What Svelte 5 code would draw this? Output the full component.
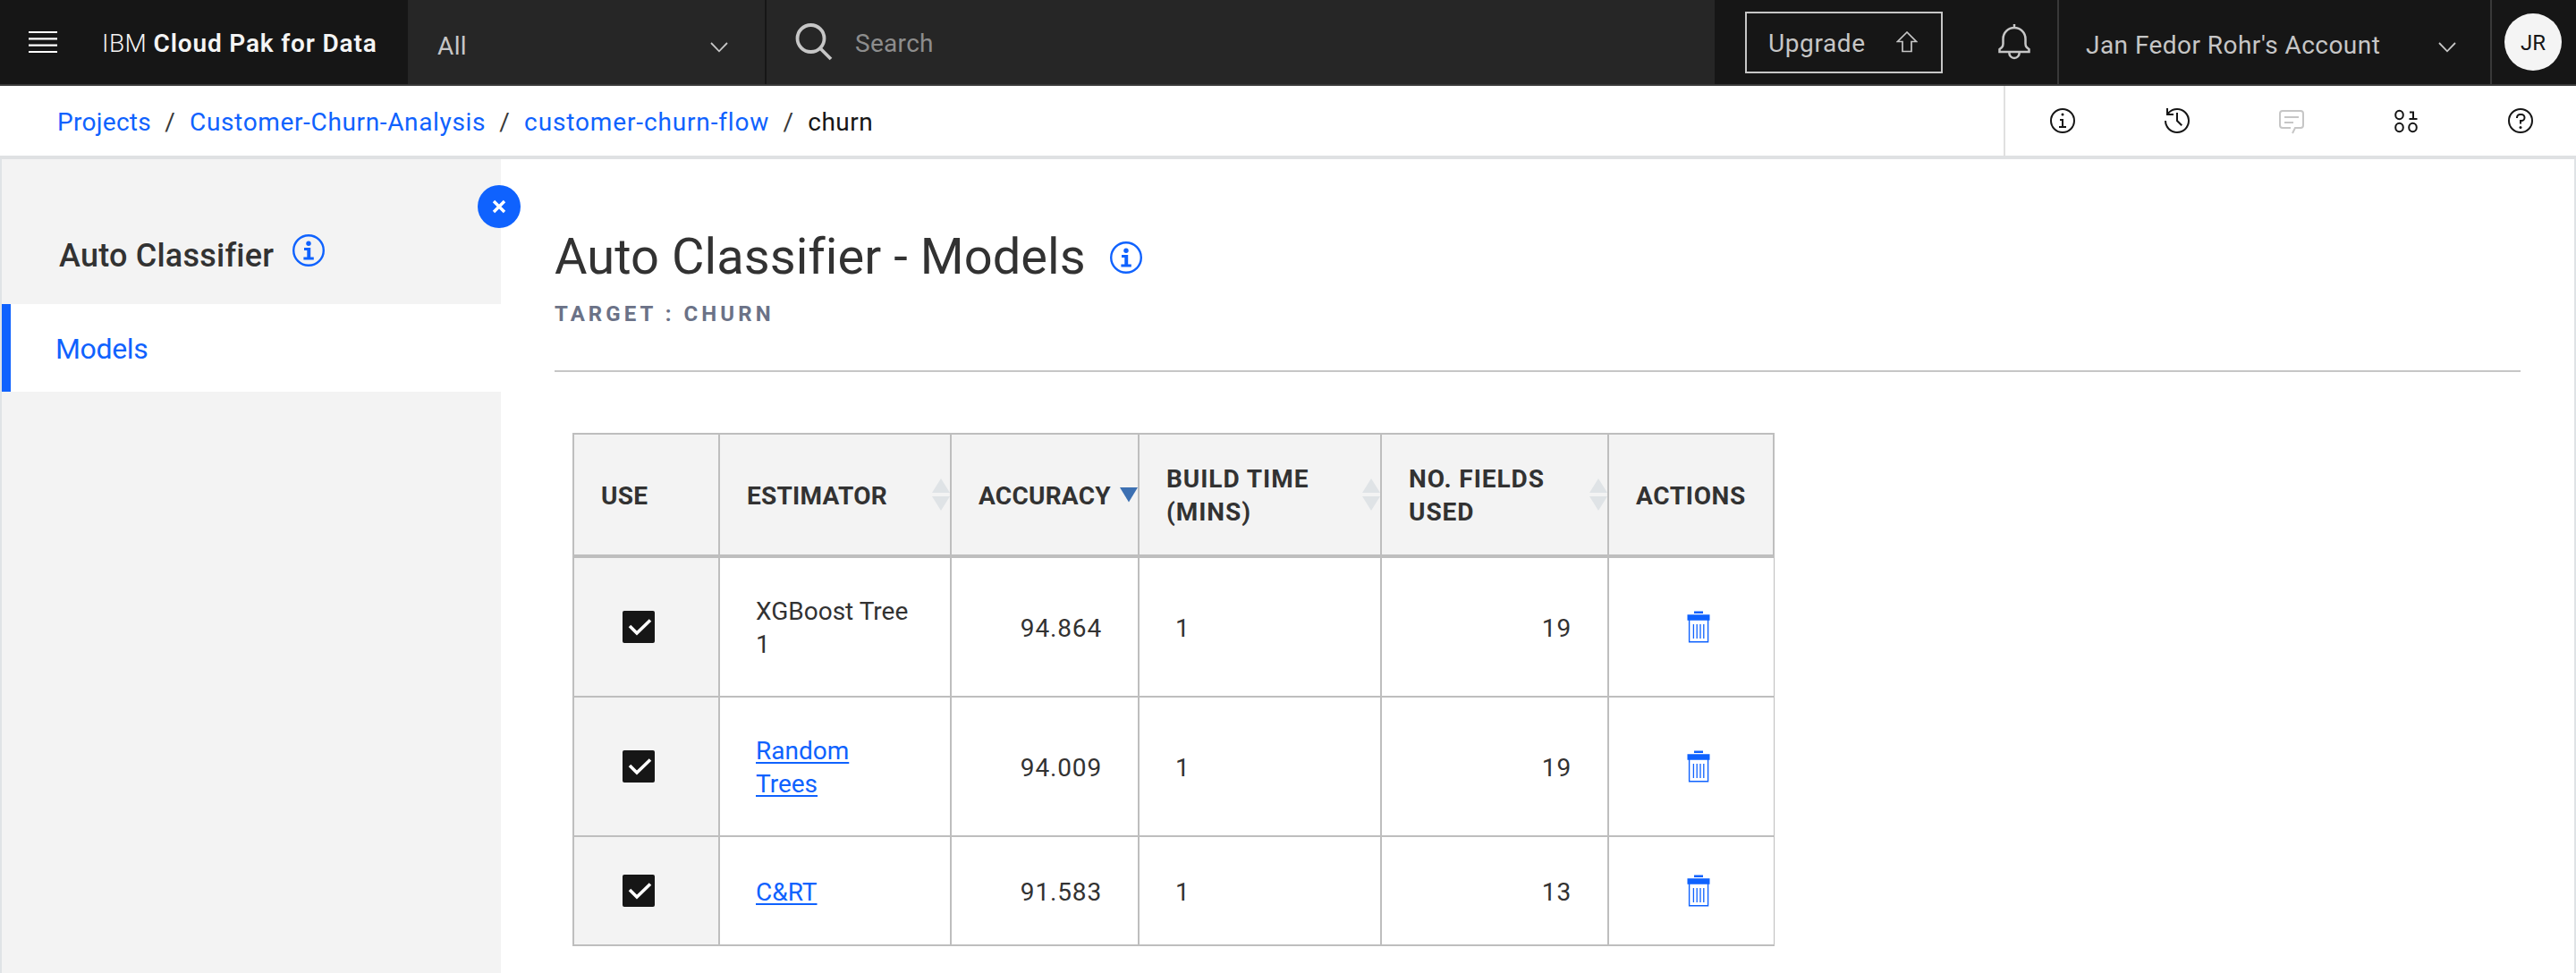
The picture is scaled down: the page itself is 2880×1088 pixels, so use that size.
<script>
  const crumbs = [
    { label: 'Projects', cls: 'c1' },
    { label: 'Customer-Churn-Analysis', cls: 'c2' },
    { label: 'customer-churn-flow', cls: 'c3' }
  ];
  const columns = [
    { label: 'USE', sort: '' },
    { label: 'ESTIMATOR', sort: 'both' },
    { label: 'ACCURACY', sort: 'down' },
    { label: 'BUILD TIME (MINS)', sort: 'both', wide: true },
    { label: 'NO. FIELDS USED', sort: 'both', wide: true },
    { label: 'ACTIONS', sort: '' }
  ];
  const models = [
    { name: 'XGBoost Tree 1', link: false, accuracy: '94.864', time: 1, fields: 19 },
    { name: 'Random Trees', link: true, accuracy: '94.009', time: 1, fields: 19 },
    { name: 'C&RT', link: true, accuracy: '91.583', time: 1, fields: 13 }
  ];
</script>

{#snippet chevron()}
  <svg class="chevron" width="20" height="12" viewBox="0 0 20 12"><path d="M1 1l9 9.3L19 1" /></svg>
{/snippet}

{#snippet info()}
  <svg class="info" width="36" height="36" viewBox="0 0 36 36">
    <circle cx="18" cy="18" r="16.8" fill="none" stroke="currentColor" stroke-width="2.4" />
    <circle cx="18" cy="10.2" r="2.7" fill="currentColor" />
    <path d="M13 15h7.200v10.600h3.600v2.900H12.400V25.600H16.300v-7.700H13z" fill="currentColor" />
  </svg>
{/snippet}

<div class="page">
  <header>
    <div class="brand">
      <svg width="32" height="24" viewBox="0 0 32 24"><path d="M0 1h32M0 8.300h32M0 15.700h32M0 23h32" stroke="#fff" stroke-width="2.200" /></svg>
      <span class="name">IBM <b>Cloud Pak for Data</b></span>
    </div>
    <div class="scope"><span>All</span>{@render chevron()}</div>
    <div class="search">
      <svg width="42" height="42" viewBox="0 0 42 42"><circle cx="17.500" cy="17" r="15" /><path d="M28 28l12 12" /></svg>
      <span>Search</span>
    </div>
    <div class="tools">
      <button class="upgrade">
        <span>Upgrade</span>
        <svg width="24" height="24" viewBox="0 0 24 24"><path d="M12 1L1.500 11.500H7V22.500H17V11.500H22.500z" /></svg>
      </button>
      <svg class="bell" width="36" height="42" viewBox="0 0 36 42">
        <path d="M18 1v4M5.500 23V17.500a12.500 12.500 0 0 1 25 0V23q0 2.500 1.500 4l2.500 2v3h-33v-3l2.500-2Q5.500 25.500 5.500 23zM12.300 33a5.700 6 0 0 0 11.400 0" />
      </svg>
    </div>
    <div class="account"><span>Jan Fedor Rohr's Account</span>{@render chevron()}</div>
    <div class="user"><div class="avatar">JR</div></div>
  </header>

  <div class="bar">
    <nav class="crumbs">
      {#each crumbs as c}
        <a class={c.cls} href="#top">{c.label}</a><i>/</i>
      {/each}
      <span>churn</span>
    </nav>
    <div class="actions">
      <div class="act">
        <svg width="32" height="32" viewBox="0 0 32 32"><circle cx="16" cy="16" r="13" class="line" /><path d="M17 22V14H13v2h2v6H12v2h8V22z" /><circle cx="16" cy="9" r="1.500" /></svg>
      </div>
      <div class="act">
        <svg width="32" height="32" viewBox="0 0 32 32"><path d="M20.590 22L15 16.410V7h2v8.580l5 5.010z" /><path d="M16 2A13.940 13.940 0 0 0 6 6.230V2H4v8h8V8H7.080A12 12 0 1 1 4 16H2A14 14 0 1 0 16 2z" /></svg>
      </div>
      <div class="act muted">
        <svg width="32" height="32" viewBox="0 0 32 32"><path class="line" d="M15 24H6a3 3 0 0 1-3-3V8a3 3 0 0 1 3-3H26a3 3 0 0 1 3 3V21a3 3 0 0 1-3 3H20l-3 6M8 12H24M8 18H18" /></svg>
      </div>
      <div class="act">
        <svg width="32" height="32" viewBox="0 0 32 32"><g class="line"><ellipse cx="8.500" cy="9.500" rx="4.300" ry="4.800" /><ellipse cx="8.500" cy="23.500" rx="4.300" ry="4.800" /><ellipse cx="23.500" cy="23.500" rx="4.300" ry="4.800" /><path d="M20 6.500H24V13.500M19.500 14H28.500" /></g></svg>
      </div>
      <div class="act">
        <svg width="32" height="32" viewBox="0 0 32 32"><circle cx="16" cy="16" r="13" class="line" /><circle cx="16" cy="23.500" r="1.500" /><path d="M17 8H15.500A4.490 4.490 0 0 0 11 12.500V13H13V12.500A2.500 2.500 0 0 1 15.500 10H17a2.500 2.500 0 0 1 0 5H15V19.500H17V17A4.500 4.500 0 0 0 17 8z" /></svg>
      </div>
    </div>
  </div>

  <div class="body">
    <aside>
      <button class="close" aria-label="Close panel">
        <svg width="16" height="16" viewBox="0 0 16 16"><path d="M2 2l12 12M14 2L2 14" /></svg>
      </button>
      <div class="side-title"><span>Auto Classifier</span>{@render info()}</div>
      <div class="side-item">Models</div>
    </aside>
    <main>
      <div class="title"><h1>Auto Classifier - Models</h1>{@render info()}</div>
      <div class="target">TARGET : CHURN</div>
      <table>
        <colgroup><col class="w1" /><col class="w2" /><col class="w3" /><col class="w4" /><col class="w5" /><col class="w6" /></colgroup>
        <thead>
          <tr>
            {#each columns as col}
              <th>
                <div class="th">
                  <span class:wide={col.wide}>{col.label}</span>
                  {#if col.sort === 'both'}
                    <svg width="20" height="36" viewBox="0 0 20 36"><path d="M10 0L20 16H0zM0 20H20L10 36z" fill="#dfe3e6" /></svg>
                  {:else if col.sort === 'down'}
                    <svg width="20" height="36" viewBox="0 0 20 36"><path d="M0 10H20L10 26.500z" fill="#3d70b2" /></svg>
                  {/if}
                </div>
              </th>
            {/each}
          </tr>
        </thead>
        <tbody>
          {#each models as m}
            <tr>
              <td class="use">
                <svg width="36" height="36" viewBox="0 0 36 36"><rect width="36" height="36" rx="2" fill="#161616" /><path d="M8 17l8 8L31 10.500" fill="none" stroke="#fff" stroke-width="3.600" /></svg>
              </td>
              <td class="est">{#if m.link}<a href="#top">{m.name}</a>{:else}{m.name}{/if}</td>
              <td class="num">{m.accuracy}</td>
              <td>{m.time}</td>
              <td class="num">{m.fields}</td>
              <td class="del">
                <svg width="26" height="36" viewBox="0 0 26 36">
                  <path d="M8 .500h10v2.500H8zM.500 4.300h25v6.400H.500z" fill="#0f62fe" />
                  <path d="M2.600 10v24.800h21V10" fill="none" stroke="#0f62fe" stroke-width="1.400" />
                  <path d="M7.400 15v16M11.200 15v16M15 15v16M18.800 15v16" fill="none" stroke="#0f62fe" stroke-width="1.300" />
                </svg>
              </td>
            </tr>
          {/each}
        </tbody>
      </table>
    </main>
  </div>
</div>

<style>
  :global(body) { margin: 0; background: #fff; }
  .page {
    width: 2880px; height: 1088px; display: flex; flex-direction: column; overflow: hidden;
    font: 400 28px/36px Roboto, "Liberation Sans", sans-serif; color: #323232; white-space: nowrap;
  }
  .page *, .page { box-sizing: border-box; }
  svg { display: block; flex: none; }
  button { font: inherit; margin: 0; cursor: pointer; }
  a { color: #0f62fe; text-decoration: none; }

  header { flex: none; height: 96px; display: flex; background: #161616; border-bottom: 2px solid #393939; color: #c6c6c6; }
  header > div { display: flex; align-items: center; }
  .brand { width: 456px; padding-left: 32px; gap: 50px; color: #f4f4f4; }
  .name { padding-top: 3px; font-weight: 300; letter-spacing: .45px; }
  .name b { font-weight: 600; letter-spacing: .84px; }
  .scope { width: 401px; padding: 0 41px 0 33px; justify-content: space-between; background: #262626; border-right: 2px solid #161616; }
  .scope span { padding-top: 9px; letter-spacing: .4px; }
  .chevron { margin-top: 12px; fill: none; stroke: #c6c6c6; stroke-width: 1.8; }
  .search { width: 1060px; padding-left: 32px; gap: 25px; background: #262626; color: #8d8d8d; }
  .search svg { fill: none; stroke: #c6c6c6; stroke-width: 3.8; }
  .search span { padding-top: 3px; letter-spacing: .3px; }
  .tools { width: 383px; padding-left: 34px; gap: 62px; }
  .upgrade {
    width: 221px; height: 69px; padding: 0 26px 0 24px; display: flex; align-items: center; justify-content: space-between;
    background: none; border: 2px solid #c6c6c6; color: #c6c6c6;
  }
  .upgrade span { padding-top: 3px; letter-spacing: .6px; }
  .upgrade svg { fill: none; stroke: #c6c6c6; stroke-width: 1.7; }
  .bell { fill: none; stroke: #c6c6c6; stroke-width: 2.5; }
  .account { width: 486px; padding: 0 38px 0 30px; justify-content: space-between; border-left: 2px solid #393939; border-right: 2px solid #393939; }
  .account span { padding-top: 7px; letter-spacing: .45px; }
  .user { padding-left: 14px; }
  .avatar { width: 64px; height: 64px; padding-top: 1px; border-radius: 50%; background: #f4f4f4; color: #161616; font-size: 24px; line-height: 64px; text-align: center; }

  .bar { flex: none; height: 82px; display: flex; justify-content: space-between; border-bottom: 4px solid #dfe1e3; }
  .crumbs { display: flex; align-items: center; padding: 3px 0 0 64px; color: #161616; }
  .crumbs i { width: 43px; padding-right: 1px; font-style: normal; text-align: center; color: #393939; }
  .c1 { letter-spacing: .3px; }
  .c2 { letter-spacing: .65px; }
  .c3 { letter-spacing: .86px; }
  .crumbs span { letter-spacing: .5px; }
  .actions { display: flex; border-left: 2px solid #e0e0e0; width: 640px; }
  .act { width: 128px; flex: none; display: flex; align-items: center; justify-content: center; fill: #161616; stroke: none; }
  .act .line { fill: none; stroke: #161616; stroke-width: 2; }
  .muted .line { stroke: #c6c6c6; }

  .body { flex: 1; display: flex; border-left: 2px solid #dfe3e6; border-right: 2px solid #dfe3e6; }
  aside { position: relative; width: 558px; flex: none; background: #f3f3f3; }
  .close {
    position: absolute; right: -22px; top: 29px; width: 48px; height: 48px; padding: 0; border: 0; border-radius: 50%;
    background: #0f62fe; display: flex; align-items: center; justify-content: center;
  }
  .close path { fill: none; stroke: #fff; stroke-width: 3.4; }
  .info { color: #0f62fe; }
  .side-title { height: 162px; padding: 84px 0 0 64px; display: flex; gap: 21px; font-size: 36px; line-height: 48px; font-weight: 500; letter-spacing: .22px; }
  .side-item { height: 98px; padding: 2px 0 0 50px; border-left: 10px solid #0f62fe; background: #fff; color: #0f62fe; font-size: 32px; line-height: 96px; letter-spacing: -.35px; }

  main { flex: 1; padding: 77px 60px 0; }
  .title { height: 64px; display: flex; align-items: center; gap: 27px; }
  h1 { margin: 0; font-size: 56px; line-height: 64px; font-weight: 400; letter-spacing: .06px; }
  .title .info { margin-top: 2px; }
  .target { height: 97px; padding-top: 16px; border-bottom: 2px solid #c6c6c6; font-size: 24px; line-height: 32px; font-weight: 700; letter-spacing: 4.050px; color: #6b7287; }

  table { width: 1344px; margin: 68px 0 0 20px; table-layout: fixed; border-collapse: separate; border-spacing: 0; border-left: 2px solid #bebebe; border-top: 2px solid #bebebe; }
  .w1 { width: 163px; } .w2 { width: 259px; } .w3 { width: 210px; } .w4 { width: 271px; } .w5 { width: 254px; } .w6 { width: 185px; }
  th { height: 138px; padding: 0 0 0 30px; background: #f3f3f3; border-right: 2px solid #bebebe; border-bottom: 4px solid #bebebe; text-align: left; font-weight: 700; line-height: 37px; white-space: normal; }
  .th { display: flex; align-items: center; justify-content: space-between; }
  .th span { padding-top: 3px; letter-spacing: .25px; }
  th:last-child span { letter-spacing: .65px; }
  .th .wide { padding-top: 1px; letter-spacing: .95px; }
  td { height: 156px; padding: 3px 40px 0; border-right: 2px solid #bebebe; border-bottom: 2px solid #bebebe; line-height: 37px; white-space: normal; }
  .est { padding-top: 1px; }
  tr:last-child td { height: 122px; }
  tr:last-child .est { padding-top: 3px; }
  td:last-child { border-right-width: 1px; }
  td a { text-decoration: underline; text-decoration-thickness: 2px; text-underline-offset: 3px; text-decoration-skip-ink: none; }
  .num { text-align: right; letter-spacing: .85px; }
  td.use { padding: 0 0 0 54px; background: #f3f3f3; }
  td.del { padding: 0 0 0 87px; }
</style>
